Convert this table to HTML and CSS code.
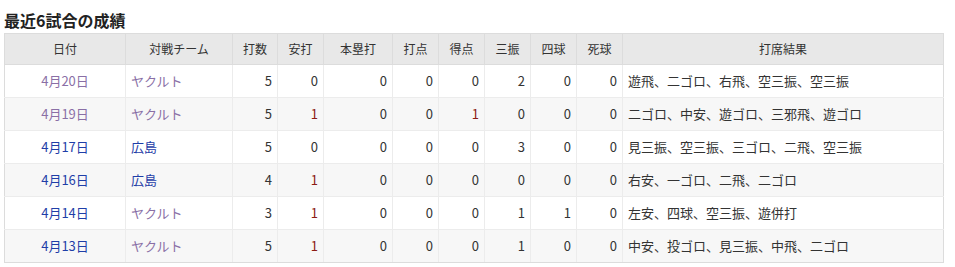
FILE: index.html
```html
<!DOCTYPE html>
<html lang="ja">
<head>
<meta charset="utf-8">
<link rel="stylesheet" href="styles.css">
</head>
<body>
<section class="recent">
  <h2 class="title">最近6試合の成績</h2>
  <table class="stats">
    <colgroup>
      <col class="c-date"><col class="c-team"><col class="c-n45"><col class="c-n46"><col class="c-hr">
      <col class="c-n46"><col class="c-n46"><col class="c-n46"><col class="c-n46"><col class="c-n46"><col class="c-res">
    </colgroup>
    <thead>
      <tr class="head"><th>日付</th><th>対戦チーム</th><th>打数</th><th>安打</th><th>本塁打</th><th>打点</th><th>得点</th><th>三振</th><th>四球</th><th>死球</th><th>打席結果</th></tr>
    </thead>
    <tbody>
      <tr><td class="date"><a class="visited" href="#">4月20日</a></td><td class="team"><a class="visited" href="#">ヤクルト</a></td><td class="num">5</td><td class="num">0</td><td class="num">0</td><td class="num">0</td><td class="num">0</td><td class="num">2</td><td class="num">0</td><td class="num">0</td><td class="res">遊飛、二ゴロ、右飛、空三振、空三振</td></tr>
      <tr><td class="date"><a class="visited" href="#">4月19日</a></td><td class="team"><a class="visited" href="#">ヤクルト</a></td><td class="num">5</td><td class="num hit">1</td><td class="num">0</td><td class="num">0</td><td class="num hit">1</td><td class="num">0</td><td class="num">0</td><td class="num">0</td><td class="res">二ゴロ、中安、遊ゴロ、三邪飛、遊ゴロ</td></tr>
      <tr><td class="date"><a href="#">4月17日</a></td><td class="team"><a href="#">広島</a></td><td class="num">5</td><td class="num">0</td><td class="num">0</td><td class="num">0</td><td class="num">0</td><td class="num">3</td><td class="num">0</td><td class="num">0</td><td class="res">見三振、空三振、三ゴロ、二飛、空三振</td></tr>
      <tr><td class="date"><a href="#">4月16日</a></td><td class="team"><a href="#">広島</a></td><td class="num">4</td><td class="num hit">1</td><td class="num">0</td><td class="num">0</td><td class="num">0</td><td class="num">0</td><td class="num">0</td><td class="num">0</td><td class="res">右安、一ゴロ、二飛、二ゴロ</td></tr>
      <tr><td class="date"><a href="#">4月14日</a></td><td class="team"><a class="visited" href="#">ヤクルト</a></td><td class="num">3</td><td class="num hit">1</td><td class="num">0</td><td class="num">0</td><td class="num">0</td><td class="num">1</td><td class="num">1</td><td class="num">0</td><td class="res">左安、四球、空三振、遊併打</td></tr>
      <tr><td class="date"><a href="#">4月13日</a></td><td class="team"><a class="visited" href="#">ヤクルト</a></td><td class="num">5</td><td class="num hit">1</td><td class="num">0</td><td class="num">0</td><td class="num">0</td><td class="num">1</td><td class="num">0</td><td class="num">0</td><td class="res">中安、投ゴロ、見三振、中飛、二ゴロ</td></tr>
    </tbody>
  </table>
</section>
</body>
</html>
```
FILE: styles.css
```css
html, body {
  margin: 0;
  padding: 0;
  background: #fff;
}
body {
  font-family: "Noto Sans CJK JP", "Noto Sans", sans-serif;
  color: #333;
}
.recent {
  padding: 10px 0 0 4px;
}
.title {
  margin: 0 0 3px 0;
  font-size: 16px;
  line-height: 20px;
  font-weight: bold;
  color: #222;
}
.stats {
  border-collapse: collapse;
  table-layout: fixed;
  width: 940px;
  font-size: 13px;
  line-height: 18px;
  border: 1px solid #dcdcdc;
}
.c-date { width: 121px; }
.c-team { width: 107px; }
.c-n45 { width: 45px; }
.c-n46 { width: 46px; }
.c-hr { width: 69px; }
.c-res { width: 321px; }
.stats tr.head { height: 31px; }
.stats tbody tr { height: 33px; }
.stats th {
  background: #e8e8e8;
  font-weight: normal;
  font-size: 12px;
  padding: 0;
  text-align: center;
  border: 1px solid #dcdcdc;
}
.stats td {
  padding: 0 5px;
  border: 1px solid #ececec;
  vertical-align: middle;
  white-space: nowrap;
}
.stats tbody tr:nth-child(even) td {
  background: #f7f7f7;
}
.stats tbody tr:last-child td {
  border-bottom: 1px solid #dcdcdc;
}
.stats td:first-child { border-left: 1px solid #dcdcdc; }
.stats td:last-child { border-right: 1px solid #dcdcdc; }
.date { text-align: center; }
.team { text-align: left; }
.num { text-align: right; }
.res { text-align: left; padding-left: 4px; }
.hit { color: #8c1c13; }
a {
  text-decoration: none;
  color: #1f3ea8;
}
a.visited {
  color: #8a6fa6;
}
```
